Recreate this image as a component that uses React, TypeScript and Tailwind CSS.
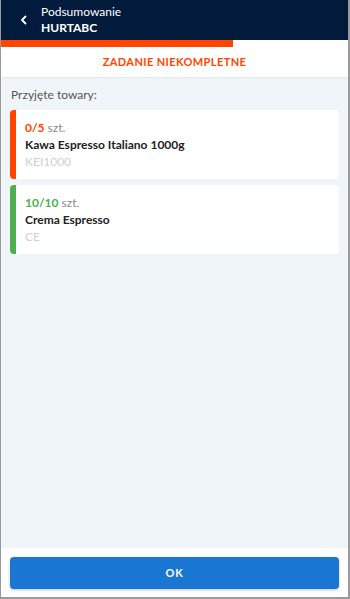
import React from "react";

type Item = {
  done: number;
  total: number;
  name: string;
  code: string;
};

const items: Item[] = [
  { done: 0, total: 5, name: "Kawa Espresso Italiano 1000g", code: "KEI1000" },
  { done: 10, total: 10, name: "Crema Espresso", code: "CE" },
];

const ItemCard: React.FC<{ item: Item }> = ({ item }) => {
  const complete = item.done >= item.total;
  return (
    <div
      className={
        "flex flex-col h-[69px] justify-center bg-white rounded-[4px] border-l-[6px] pl-[9px] " +
        (complete ? "border-[#4caf50]" : "border-[#ff4500]")
      }
    >
      <div className="text-[12px] leading-[17px]">
        <span className={"font-bold " + (complete ? "text-[#4caf50]" : "text-[#ff4500]")}>
          {item.done}/{item.total}
        </span>{" "}
        <span className="text-[#8a8a8a]">szt.</span>
      </div>
      <div className="text-[12px] leading-[17px] font-bold text-[#222]">{item.name}</div>
      <div className="text-[12px] leading-[17px] text-[#d0d0d0]">{item.code}</div>
    </div>
  );
};

export default function App() {
  const progress = 67;

  return (
    <div
      className="w-[350px] h-[599px] flex flex-col bg-[#f0f5fa] border-l border-r-2 border-b-2 border-[#9a9a9a] overflow-hidden"
      style={{ fontFamily: "Lato, 'Noto Sans', sans-serif" }}
    >
      <div className="h-[40px] bg-[#021a3b] flex items-center text-white shrink-0">
        <div className="w-[40px] flex justify-center pl-[5px]">
          <svg width="10" height="10" viewBox="0 0 10 10" fill="none">
            <path d="M6.5 1.5 L3 5 L6.5 8.5" stroke="white" strokeWidth="1.8" strokeLinecap="round" strokeLinejoin="round" />
          </svg>
        </div>
        <div className="flex flex-col leading-[16px]">
          <span className="text-[12px]">Podsumowanie</span>
          <span className="text-[12px] font-bold">HURTABC</span>
        </div>
      </div>

      <div className="bg-white shadow-[0_1px_2px_rgba(0,0,0,0.06)] shrink-0">
        <div className="h-[7px] bg-white">
          <div className="h-full bg-[#ff4500]" style={{ width: progress + "%" }} />
        </div>
        <div className="h-[30px] flex items-center justify-center text-[11px] font-bold tracking-[0.4px] text-[#ff4500]">
          ZADANIE NIEKOMPLETNE
        </div>
      </div>

      <div className="flex-1 flex flex-col px-[9px] pt-[10px]">
        <div className="text-[12px] text-[#555] leading-[16px] pl-px mb-[7px]">Przyjęte towary:</div>
        <div className="flex flex-col gap-[6px]">
          {items.map((it) => (
            <ItemCard key={it.code} item={it} />
          ))}
        </div>
      </div>

      <div className="bg-white px-[9px] pt-[9px] pb-[8px] shrink-0">
        <button className="w-full h-[32px] rounded-[4px] bg-[#1976d2] text-white text-[11px] font-bold tracking-[0.8px] shadow-[0_1px_3px_rgba(0,0,0,0.25)]">
          OK
        </button>
      </div>
    </div>
  );
}
